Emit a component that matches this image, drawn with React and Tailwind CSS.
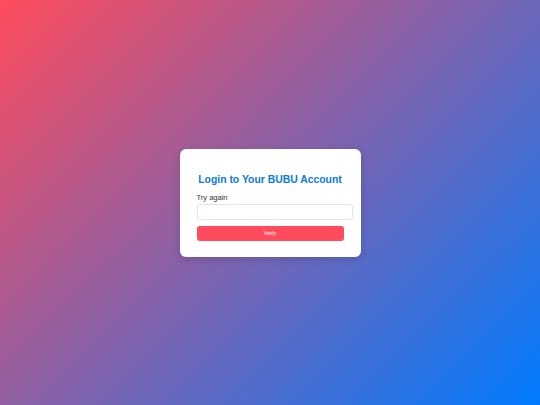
import React from 'react';

const App = () => {
  return (
    <div
      className="w-[540px] h-[405px] flex items-center justify-center bg-[linear-gradient(135deg,#ff4b5c,#007bff)]"
      style={{ fontFamily: '"Liberation Sans", Arial, sans-serif' }}
    >
      <div className="w-[181px] bg-white rounded-[6px] shadow-[0_2px_8px_rgba(0,0,0,0.15)] px-[17px] pt-[23px] pb-[16px]">
        <h2 className="text-center whitespace-nowrap text-[10.4px] leading-[16px] font-bold text-[#0a7bdc]">Login to Your BUBU Account</h2>
        <form className="mt-[5px]" onSubmit={(e) => e.preventDefault()}>
          <label className="block text-[7.5px] leading-[10px] text-[#333]">Try again</label>
          <input
            type="text"
            className="block mt-[1px] w-[156px] h-[16px] border border-[#e3e3e3] rounded-[3px] bg-white outline-none"
          />
          <button
            type="submit"
            className="block mt-[6px] w-[147px] h-[15px] rounded-[3px] bg-[#ff4b5c] text-white text-[5px] leading-[15px] text-center"
          >
            Verify
          </button>
        </form>
      </div>
    </div>
  );
};

export default App;
